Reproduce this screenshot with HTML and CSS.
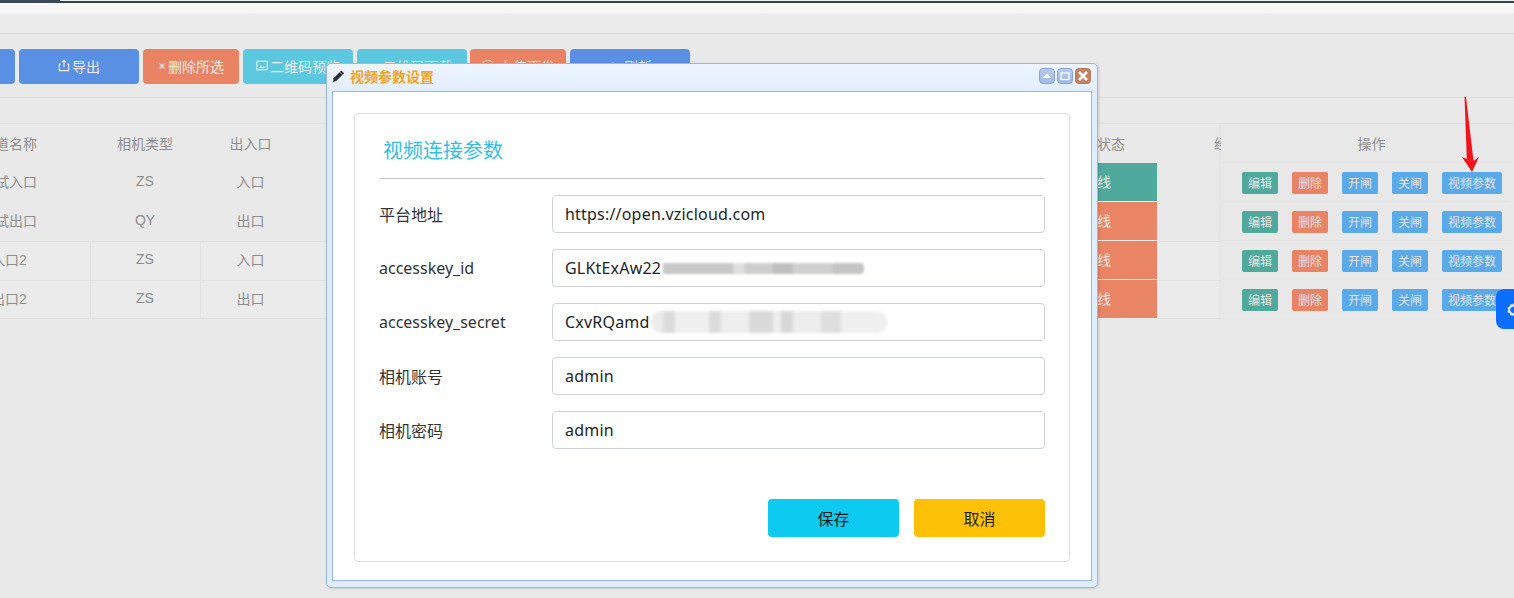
FILE: index.html
```html
<!DOCTYPE html>
<html lang="zh-CN">
<head>
<meta charset="utf-8">
<title>视频参数设置</title>
<link rel="stylesheet" href="styles.css">
</head>
<body>
<div class="page">
  <div class="topbar"><div class="topbar-tab"></div></div>
  <div class="tabstrip"></div>
  <div class="toolbar">
    <a class="tbtn blue cut">新增</a>
    <a class="tbtn blue w120"><svg class="ti" viewBox="0 0 12 14"><path d="M2.500 5.500H1v7h10v-7H9.500M6 9V1.500M4 3.500l2-2 2 2" fill="none" stroke="currentColor" stroke-width="1.200"/></svg>导出</a>
    <a class="tbtn orange w96"><span class="tx">×</span>删除所选</a>
    <a class="tbtn cyan w110"><svg class="ti" viewBox="0 0 14 12"><rect x="1" y="1" width="12" height="10" fill="none" stroke="currentColor" stroke-width="1.300"/><path d="M3 9l3-3 2 2 1.500-1L11 9z" fill="currentColor"/></svg>二维码预览</a>
    <a class="tbtn cyan w110">↓ 二维码下载</a>
    <a class="tbtn orange w96 tuck">◯ 上传下发</a>
    <a class="tbtn blue w120">⟳ 刷新</a>
  </div>
  <div class="table">
    <div class="tr head">
      <div class="td c1">通道名称</div><div class="td c2">相机类型</div><div class="td c3">出入口</div><div class="td c4"></div><div class="td c5">相机状态</div><div class="td c6">经</div>
      <div class="td ops head-ops">操作</div>
    </div>
    <div class="tr">
      <div class="td c1">测试入口</div><div class="td c2">ZS</div><div class="td c3">入口</div><div class="td c4"></div><div class="td c5 on">在线</div><div class="td c6"></div>
      <div class="td ops"><a class="obtn green">编辑</a><a class="obtn red">删除</a><a class="obtn sky">开闸</a><a class="obtn sky">关闸</a><a class="obtn sky wide">视频参数</a></div>
    </div>
    <div class="tr">
      <div class="td c1">测试出口</div><div class="td c2">QY</div><div class="td c3">出口</div><div class="td c4"></div><div class="td c5 off">离线</div><div class="td c6"></div>
      <div class="td ops"><a class="obtn green">编辑</a><a class="obtn red">删除</a><a class="obtn sky">开闸</a><a class="obtn sky">关闸</a><a class="obtn sky wide">视频参数</a></div>
    </div>
    <div class="tr lined">
      <div class="td c1">入口2</div><div class="td c2">ZS</div><div class="td c3">入口</div><div class="td c4"></div><div class="td c5 off">离线</div><div class="td c6"></div>
      <div class="td ops"><a class="obtn green">编辑</a><a class="obtn red">删除</a><a class="obtn sky">开闸</a><a class="obtn sky">关闸</a><a class="obtn sky wide">视频参数</a></div>
    </div>
    <div class="tr lined last">
      <div class="td c1">出口2</div><div class="td c2">ZS</div><div class="td c3">出口</div><div class="td c4"></div><div class="td c5 off">离线</div><div class="td c6"></div>
      <div class="td ops"><a class="obtn green">编辑</a><a class="obtn red">删除</a><a class="obtn sky">开闸</a><a class="obtn sky">关闸</a><a class="obtn sky wide">视频参数</a></div>
    </div>
  </div>

  <svg class="arrow" viewBox="0 0 18 76"><path d="M2.500 0L4.800 62L0 60L10 75L17 60L11.500 64L4 0Z" fill="#f5131b"/></svg>

  <div class="float-tab">
    <svg viewBox="0 0 24 24"><path d="M12 4l2 2.500 3-.5 1 3 3 1.500-1 3 1 3-3 1.500-1 3-3-.5-2 2.500-2-2.500-3 .5-1-3-3-1.500 1-3-1-3 3-1.500 1-3 3 .5z" fill="none" stroke="#e8f0ff" stroke-width="3.500"/></svg>
  </div>

  <div class="window">
    <div class="win-head">
      <svg class="pencil" viewBox="0 0 14 14"><path d="M10 1l3 3-8.500 8.500L1 13.500l.8-4z" fill="#2b2b2b"/><path d="M8.500 2.800l2.800 2.800" stroke="#e0ecff" stroke-width=".8"/></svg>
      <span class="win-title">视频参数设置</span>
      <div class="win-tools">
        <span class="wt"><svg viewBox="0 0 14 14"><path d="M2.500 9L7 4.500 11.500 9z" fill="#fff"/></svg></span>
        <span class="wt"><svg viewBox="0 0 14 14"><rect x="3" y="4" width="8" height="6.500" fill="none" stroke="#fff" stroke-width="1.200"/></svg></span>
        <span class="wt close"><svg viewBox="0 0 14 14"><path d="M3 3l8 8M11 3l-8 8" stroke="#fff" stroke-width="2.500"/></svg></span>
      </div>
    </div>
    <div class="win-body">
      <div class="card">
        <h2 class="card-title">视频连接参数</h2>
        <div class="form">
          <div class="row"><label class="lab">平台地址</label><div class="inp">https://open.vzicloud.com</div></div>
          <div class="row"><label class="lab">accesskey_id</label><div class="inp">GLKtExAw22<span class="mask mask-a"></span></div></div>
          <div class="row"><label class="lab">accesskey_secret</label><div class="inp">CxvRQamd<span class="mask mask-b"></span></div></div>
          <div class="row"><label class="lab">相机账号</label><div class="inp">admin</div></div>
          <div class="row"><label class="lab">相机密码</label><div class="inp">admin</div></div>
        </div>
        <div class="actions">
          <button class="btn save">保存</button>
          <button class="btn cancel">取消</button>
        </div>
      </div>
    </div>
  </div>
</div>
</body>
</html>
```
FILE: styles.css
```css
* { box-sizing: border-box; }
html, body { margin: 0; padding: 0; }
body { font-family: "Liberation Sans", "Noto Sans CJK SC", sans-serif; }
.page {
  position: relative;
  width: 1514px;
  height: 598px;
  overflow: hidden;
  background: #e9e9e9;
}
.topbar {
  height: 3px;
  background: #2c4358;
  border-top: 1px solid #f5f5f5;
}
.topbar-tab { width: 60px; height: 3px; margin-top: -1px; background: #3a4a58; }
.tabstrip {
  height: 31px;
  background: linear-gradient(#f8f8f8 0, #f6f6f6 10px, #ebebeb 11px, #ebebeb 100%);
  border-bottom: 1px solid #dcdcdc;
}
.toolbar {
  display: flex;
  gap: 4px;
  height: 64px;
  padding: 15px 0 0;
  margin-left: -86px;
  border-bottom: 1px solid #dcdcdc;
  width: 1600px;
}
.tbtn {
  display: flex;
  align-items: center;
  justify-content: center;
  height: 35px;
  padding-bottom: 2px;
  border-radius: 4px;
  color: #ececec;
  font-size: 14px;
}
.tx { margin-right: 2px; }
.ti { width: 12px; height: 13px; margin-right: 2px; }
.blue { background: #5a90e4; }
.orange { background: #e98363; }
.cyan { background: #5bc8e0; }
.cut { width: 101px; }
.w120 { width: 120px; }
.w96 { width: 96px; }
.w110 { width: 110px; }
.tuck { margin-left: -1px; }
.table {
  margin-top: 25px;
  margin-left: -72px;
  border-top: 1px solid #e2e2e2;
}
.tr { display: flex; height: 39px; }
.tr.lined { background: #ebebeb; box-shadow: inset 0 1px 0 #e0e0e0; }
.tr.last { box-shadow: inset 0 1px 0 #e0e0e0, inset 0 -1px 0 #e0e0e0; }
.td {
  display: flex;
  align-items: center;
  justify-content: center;
  padding-bottom: 3px;
  color: #8e8e8e;
  font-size: 14px;
  flex: none;
}
.head .td { padding-bottom: 2px; }
.c1 { width: 162px; }
.c2 { width: 110px; }
.c3 { width: 101px; }
.c4 { width: 736px; }
.c5 { width: 120px; }
.c6 { width: 64px; justify-content: flex-start; padding-left: 57px; overflow: hidden; white-space: nowrap; }
.lined .c2, .lined .c3 { box-shadow: inset 1px 0 0 #e0e0e0; }
.on { background: #4fa99c; color: #e8e8e8; border-bottom: 1px solid #ebebeb; }
.off { background: #e98464; color: #e8e8e8; border-bottom: 1px solid #ebebeb; }
.td.ops {
  width: 293px;
  height: 100%;
  padding: 0 0 0 21px;
  background: #e8e8e8;
  box-shadow: -2px 0 3px rgba(0,0,0,.03);
  gap: 14px;
  justify-content: flex-start;
}
.head .td.head-ops { justify-content: center; padding: 0 0 2px 8px; }
.obtn {
  display: flex;
  align-items: center;
  justify-content: center;
  width: 36px;
  height: 22px;
  border-radius: 2px;
  color: #e4e4e4;
  font-size: 12px;
}
.wide { width: 60px; }
.green { background: #4fa99c; }
.red { background: #e98363; }
.sky { background: #5aa9e8; }
.arrow { position: absolute; left: 1462px; top: 97px; width: 18px; height: 76px; }
.float-tab {
  position: absolute;
  left: 1496px;
  top: 289px;
  width: 40px;
  height: 40px;
  border-radius: 8px;
  background: #0d6efd;
  padding: 13px 0 0 11px;
}
.float-tab svg { display: block; width: 14px; height: 14px; }
.window {
  position: absolute;
  left: 326px;
  top: 63px;
  width: 772px;
  height: 525px;
  display: flex;
  flex-direction: column;
  padding: 0 5px 6px;
  border: 1px solid #95b8e7;
  border-radius: 5px;
  background: linear-gradient(#eff5ff, #e0ecff 30px, #e0ecff);
  box-shadow: 1px 1px 3px rgba(0,0,0,.12);
}
.win-head {
  display: flex;
  align-items: center;
  height: 27px;
  padding-bottom: 3px;
  flex: none;
}
.pencil { width: 13px; height: 14px; margin-right: 5px; }
.win-title {
  color: #f5a31b;
  font-size: 14px;
  font-weight: bold;
  font-family: "Noto Sans CJK SC", sans-serif;
}
.win-tools { margin-left: auto; display: flex; gap: 2px; margin-right: 1px; }
.wt {
  display: block;
  width: 16px;
  height: 16px;
  border: 1px solid #8aa5d0;
  border-radius: 4px;
  background: linear-gradient(#b4cbf0, #a0bbe8);
}
.wt svg { display: block; width: 14px; height: 14px; }
.wt.close { background: #c9805f; border-color: #b9785c; }
.win-body {
  flex: 1;
  padding: 21px 21px 18px;
  background: #fff;
  border: 1px solid #95b8e7;
}
.card {
  height: 100%;
  border: 1px solid #dcdcdc;
  border-radius: 4px;
  padding: 0 24px;
  display: flex;
  flex-direction: column;
}
.card-title {
  margin: 0;
  height: 65px;
  padding: 22px 0 0 4px;
  line-height: 28px;
  font-size: 20px;
  font-weight: normal;
  color: #34bfe3;
  border-bottom: 1px solid #c8c8c8;
  font-family: "Noto Sans CJK SC", sans-serif;
}
.form { display: flex; flex-direction: column; gap: 16px; margin-top: 16px; }
.row { display: flex; align-items: center; }
.lab {
  width: 173px;
  flex: none;
  font-size: 16px;
  color: #333;
  font-family: "Noto Sans", "Noto Sans CJK SC", sans-serif;
}
.inp {
  flex: 1;
  display: flex;
  align-items: center;
  height: 38px;
  padding: 0 12px;
  border: 1px solid #ced4da;
  border-radius: 4px;
  font-size: 16px;
  letter-spacing: .2px;
  color: #212529;
  overflow: hidden;
  white-space: nowrap;
  font-family: "Noto Sans", "Noto Sans CJK SC", sans-serif;
}
.mask { display: block; flex: none; }
.mask-a {
  width: 201px;
  height: 11px;
  margin-left: 2px;
  border-radius: 0 4px 4px 0;
  filter: blur(.8px);
  background: linear-gradient(90deg, #c8c8c8 0 70px, #dedede 70px 82px, #cdcdcd 82px 110px, #c0c0c0 110px 130px, #cfcfcf 130px 170px, #c4c4c4 170px);
}
.mask-b {
  width: 236px;
  height: 22px;
  margin-left: 1px;
  border-radius: 10px;
  filter: blur(1.5px);
  background: linear-gradient(90deg, #ececec 0 12px, #dcdcdc 12px 24px, #f0f0f0 24px 58px, #dcdcdc 58px 70px, #eeeeee 70px 98px, #dadada 98px 122px, #eeeeee 122px 130px, #d8d8d8 130px 142px, #ededed 142px 170px, #dedede 170px 190px, #f0f0f0 190px);
}
.actions {
  display: flex;
  justify-content: flex-end;
  gap: 15px;
  margin-top: 50px;
}
.btn {
  width: 131px;
  height: 38px;
  border: 0;
  border-radius: 4px;
  font-size: 16px;
  color: #1c1c1c;
  font-family: "Noto Sans CJK SC", sans-serif;
}
.save { background: #0dcaf0; }
.cancel { background: #ffc107; }
```
